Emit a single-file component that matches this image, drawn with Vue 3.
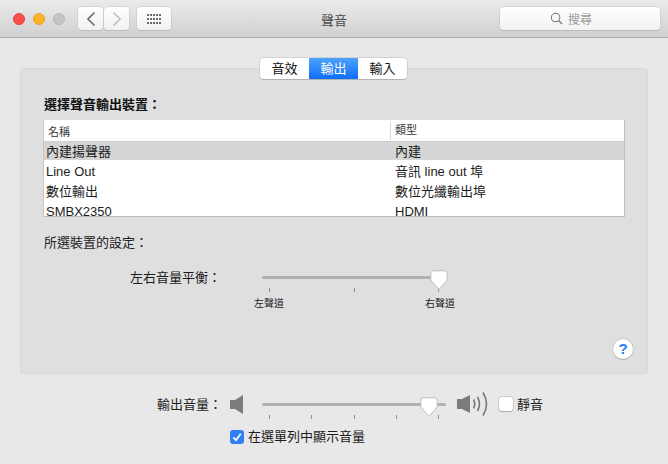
<script setup>
const rows = [
  { name: '內建揚聲器', type: '內建', selected: true },
  { name: 'Line Out', type: '音訊 line out 埠' },
  { name: '數位輸出', type: '數位光纖輸出埠' },
  { name: 'SMBX2350', type: 'HDMI' },
]
const dots = Array.from({ length: 15 })
</script>

<template>
  <div class="window">
    <header class="toolbar">
      <div class="lights">
        <span class="light red"></span>
        <span class="light yellow"></span>
        <span class="light gray"></span>
      </div>
      <div class="nav">
        <button class="tbtn navbtn">
          <svg width="10" height="16" viewBox="0 0 10 16"><path d="M8.5 1.5 L2 8 L8.5 14.5" fill="none" stroke="#6f6f6f" stroke-width="1.7"/></svg>
        </button>
        <button class="tbtn navbtn">
          <svg width="10" height="16" viewBox="0 0 10 16"><path d="M1.5 1.5 L8 8 L1.5 14.5" fill="none" stroke="#c0c0c0" stroke-width="1.7"/></svg>
        </button>
      </div>
      <button class="tbtn gridbtn">
        <span class="grid"><i v-for="(d, i) in dots" :key="i"></i></span>
      </button>
      <div class="title">聲音</div>
      <div class="search">
        <svg width="13" height="13" viewBox="0 0 14 14"><circle cx="6" cy="6" r="4.6" fill="none" stroke="#777" stroke-width="1.1"/><path d="M9.4 9.4 L13 13" stroke="#777" stroke-width="1.4"/></svg>
        <span>搜尋</span>
      </div>
    </header>

    <main class="content">
      <section class="panel">
        <div class="tabs">
          <span class="tab">音效</span>
          <span class="tab active">輸出</span>
          <span class="tab">輸入</span>
        </div>
        <h2 class="heading">選擇聲音輸出裝置：</h2>
        <div class="table">
          <div class="thead">
            <span class="col1">名稱</span>
            <span class="col2">類型</span>
          </div>
          <div v-for="r in rows" :key="r.name" class="row" :class="{ selected: r.selected }">
            <span class="col1">{{ r.name }}</span>
            <span class="col2">{{ r.type }}</span>
          </div>
        </div>
        <div class="sub">所選裝置的設定：</div>
        <div class="balance">
          <span class="balance-label">左右音量平衡：</span>
          <div class="slider balance-slider">
            <div class="track"></div>
            <svg class="thumb" width="18" height="21" viewBox="0 0 18 21"><path d="M3.5 .8 H14.5 A2.7 2.7 0 0 1 17.2 3.5 V10 L9 19.5 L.8 10 V3.5 A2.7 2.7 0 0 1 3.5 .8 Z" fill="#fff" stroke="#bdbdbd" stroke-width="1"/></svg>
            <div class="ticks"><i></i><i></i><i></i></div>
            <div class="tick-labels"><span>左聲道</span><span>右聲道</span></div>
          </div>
        </div>
        <div class="help-row"><span class="help">?</span></div>
      </section>

      <div class="volume">
        <span class="vol-label">輸出音量：</span>
        <svg class="spk" width="14" height="19" viewBox="0 0 14 19"><path d="M0 5 H5 L13 0 V19 L5 14 H0 Z" fill="#7c7c7c"/></svg>
        <div class="slider vol-slider">
          <div class="track"></div>
          <svg class="thumb" width="18" height="21" viewBox="0 0 18 21"><path d="M3.5 .8 H14.5 A2.7 2.7 0 0 1 17.2 3.5 V10 L9 19.5 L.8 10 V3.5 A2.7 2.7 0 0 1 3.5 .8 Z" fill="#fff" stroke="#bdbdbd" stroke-width="1"/></svg>
          <div class="ticks"><i></i><i></i><i></i><i></i><i></i></div>
        </div>
        <svg class="spk-loud" width="32" height="24" viewBox="0 0 32 24"><path d="M0 7 H5 L13 3 V21 L5 17 H0 Z" fill="#7c7c7c"/><g fill="none" stroke="#777" stroke-width="1.6"><path d="M16.5 7.5 Q19 12 16.5 16.5"/><path d="M20.5 5 Q24.5 12 20.5 19"/><path d="M26 .5 Q33 12 26 23.5"/></g></svg>
        <span class="check"></span>
        <span class="mute">靜音</span>
      </div>
      <div class="menu-opt">
        <span class="check checked">
          <svg width="14" height="14" viewBox="0 0 14 14"><path d="M3.4 7.4 L6 10.2 L10.8 3.8" fill="none" stroke="#fff" stroke-width="1.7"/></svg>
        </span>
        <span>在選單列中顯示音量</span>
      </div>
    </main>
  </div>
</template>

<style scoped>
.window {
  width: 668px;
  height: 464px;
  background: #e8e8e8;
  font-family: "Liberation Sans", "Noto Sans CJK TC", sans-serif;
  font-size: 13px;
  color: #1c1c1c;
  overflow: hidden;
  display: flex;
  flex-direction: column;
}
.toolbar {
  height: 37px;
  flex: none;
  box-sizing: content-box;
  border-bottom: 1px solid #acacac;
  background: linear-gradient(#ebebeb, #d0d0d0);
  display: flex;
  align-items: center;
  padding: 0 8px 0 13px;
  position: relative;
}
.lights { display: flex; gap: 8px; margin-right: 13px; }
.light { width: 12px; height: 12px; border-radius: 50%; box-sizing: border-box; }
.red { background: #fc4f4b; border: 1px solid #e5423d; }
.yellow { background: #fdb327; border: 1px solid #e29f22; }
.gray { background: #c4c4c4; border: 1px solid #b5b5b5; }
.nav { display: flex; gap: 1px; margin-right: 8px; }
.tbtn {
  height: 23px;
  padding: 0;
  border: none;
  border-radius: 4px;
  background: linear-gradient(#fefefe, #f1f1f1);
  box-shadow: 0 0 0 .5px #c4c4c4, 0 1px 0 #b3b3b3;
  display: flex;
  align-items: center;
  justify-content: center;
}
.navbtn { width: 25px; }
.gridbtn { width: 34px; }
.grid { display: grid; grid-template-columns: repeat(5, 2px); grid-auto-rows: 2px; gap: 2px 1px; }
.grid i { background: #6b6b6b; }
.title {
  position: absolute;
  left: 0;
  right: 0;
  padding-top: 1px;
  text-align: center;
  font-size: 13px;
  color: #4d4d4d;
  pointer-events: none;
}
.search {
  margin-left: auto;
  width: 160px;
  height: 23px;
  box-sizing: border-box;
  padding-right: 18px;
  border-radius: 4px;
  background: linear-gradient(#fefefe, #f3f3f3);
  box-shadow: 0 0 0 .5px #c4c4c4, 0 1px 0 #b3b3b3;
  display: flex;
  align-items: center;
  justify-content: center;
  gap: 5px;
  color: #9a9a9a;
  font-size: 12px;
}
.content { flex: 1; padding: 30px 20px 0; display: flex; flex-direction: column; }
.panel {
  position: relative;
  height: 306px;
  flex: none;
  box-sizing: border-box;
  background: #dfdfdf;
  border: 1px solid #d8d8d8;
  border-radius: 4px;
  padding: 27px 22px 0 23px;
  display: flex;
  flex-direction: column;
}
.tabs {
  position: absolute;
  top: -11px;
  left: 239px;
  display: flex;
  height: 21px;
  background: #fff;
  border-radius: 4px;
  box-shadow: 0 0 0 .5px #bcbcbc, 0 1px 0 #a9a9a9;
  overflow: hidden;
}
.tab {
  width: 49px;
  text-align: center;
  line-height: 21px;
  font-size: 13px;
  color: #111;
}
.tab.active { background: linear-gradient(#4da3fd, #0e6dfb); color: #fff; }
.heading { margin: 0 0 7px; font-size: 13px; font-weight: 700; line-height: 17px; color: #111; }
.table {
  height: 97px;
  box-sizing: border-box;
  margin-left: -1px;
  width: 582px;
  background: #fff;
  border: 1px solid #bdbdbd;
  border-top: none;
  border-left-color: #c8c8c8;
  overflow: hidden;
}
.thead {
  height: 22px;
  display: flex;
  align-items: center;
  border-bottom: 1px solid #cfcfcf;
  box-sizing: border-box;
  font-size: 11px;
  color: #3a3a3a;
}
.thead .col1 { width: 346px; padding-left: 4px; box-sizing: border-box; }
.thead .col2 { flex: 1; border-left: 1px solid #d9d9d9; padding-left: 4px; line-height: 19px; }
.row {
  height: 18px;
  margin-bottom: 2px;
  box-sizing: border-box;
  padding-top: 1px;
  display: flex;
  align-items: flex-start;
  font-size: 13px;
  line-height: 18px;
}
.row .col1 { width: 351px; padding-left: 2px; box-sizing: border-box; }
.row .col2 { flex: 1; white-space: nowrap; }
.row.selected { background: #d5d5d5; }
.sub { margin-top: 17px; line-height: 17px; font-size: 13px; color: #222; }
.balance { display: flex; margin-top: 18px; padding-left: 86px; }
.balance-label { width: 132px; line-height: 17px; font-size: 13px; }
.slider { position: relative; }
.track { height: 3px; border-radius: 2px; background: #b0b0b0; }
.thumb { position: absolute; top: -6px; }
.balance-slider { width: 178px; margin-top: 7px; }
.balance-slider .thumb { left: 168px; }
.ticks { display: flex; justify-content: space-between; }
.ticks i { width: 1px; height: 4px; background: #8e8e8e; display: block; }
.balance-slider .ticks { margin: 9px 1px 0 7px; }
.tick-labels {
  display: flex;
  justify-content: space-between;
  margin: 5px -15px 0 -8px;
  font-size: 10px;
  line-height: 14px;
  color: #222;
}
.help-row { margin-top: auto; display: flex; justify-content: flex-end; padding-bottom: 14px; margin-right: -8px; }
.help {
  width: 20px;
  height: 20px;
  border-radius: 50%;
  background: #fff;
  box-shadow: 0 0 0 .5px #b5b5b5, 0 1px 0 #a5a5a5;
  color: #1f7cf6;
  font-weight: 700;
  font-size: 15px;
  line-height: 20px;
  text-align: center;
}
.volume { display: flex; align-items: center; margin-top: 18px; height: 24px; padding-left: 137px; }
.vol-label { width: 73px; font-size: 13px; white-space: nowrap; margin-bottom: 2px; }
.spk { margin-right: 18px; }
.vol-slider { width: 184px; margin-top: 14px; margin-right: 11px; }
.vol-slider .thumb { left: 158px; }
.vol-slider .ticks { margin: 9px 7px 0 7px; }
.spk-loud { margin-right: 10px; }
.check {
  width: 14px;
  height: 14px;
  flex: none;
  box-sizing: border-box;
  border-radius: 3px;
  background: #fff;
  box-shadow: 0 0 0 .5px #b0b0b0, 0 .5px 1px #aaa;
}
.mute { margin-left: 4px; margin-bottom: 2px; font-size: 13px; }
.check.checked { background: #2f80f2; box-shadow: none; display: block; }
.menu-opt { display: flex; align-items: center; gap: 4px; margin: 12px 0 0 210px; font-size: 13px; line-height: 18px; }
</style>
<style>
html, body { margin: 0; background: #e8e8e8; }
button { font: inherit; }
</style>
